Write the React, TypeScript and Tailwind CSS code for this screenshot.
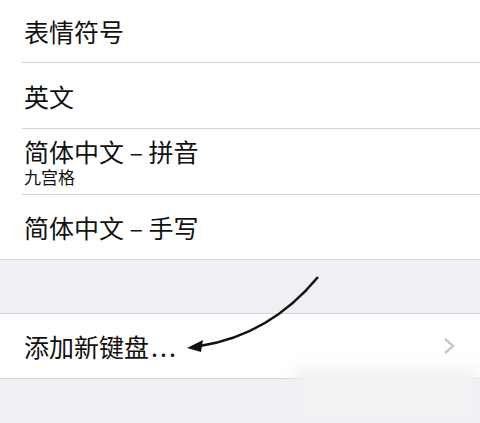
import React from "react";

const font = { fontFamily: '"Noto Sans CJK SC", "Noto Sans", sans-serif' };

function Row({ h, children, line = true }: { h: string; children: React.ReactNode; line?: boolean }) {
  return (
    <div className="flex flex-col">
      <div className={`${h} flex flex-col justify-center pl-[24px]`}>{children}</div>
      {line && <div className="ml-[22px] h-px bg-[#d4d4d8]" />}
    </div>
  );
}

export default function App() {
  return (
    <div className="relative w-[480px] h-[423px] overflow-hidden bg-[#efeff4] text-[#111]" style={font}>
      <div className="flex flex-col bg-white border-b border-[#d4d4d8]">
        <Row h="h-[62px]">
          <span className="text-[25px] leading-[28px]">表情符号</span>
        </Row>
        <Row h="h-[65px]">
          <span className="text-[25px] leading-[28px]">英文</span>
        </Row>
        <Row h="h-[65px]">
          <span className="text-[25px] leading-[28px]">简体中文 – 拼音</span>
          <span className="text-[17px] leading-[18px] mt-[3px]">九宫格</span>
        </Row>
        <Row h="h-[64px]" line={false}>
          <span className="text-[25px] leading-[28px]">简体中文 – 手写</span>
        </Row>
      </div>
      <div className="h-[53px]" />
      <div className="flex h-[66px] items-center justify-between bg-white border-y border-[#d4d4d8] pl-[24px] pr-[24px]">
        <span className="text-[25px] leading-[28px]">
          添加新键盘<span className="tracking-[2px] ml-[2px]">...</span>
        </span>
        <svg width="14" height="20" viewBox="0 0 14 20">
          <polyline points="3,3 11,10 3,17" fill="none" stroke="#c7c7cc" strokeWidth="2.5" />
        </svg>
      </div>
      <div className="absolute left-[295px] top-[367px] w-[185px] h-[56px] bg-[#f2f2f4] blur-sm" />
      <svg className="absolute left-0 top-0" width="480" height="423" viewBox="0 0 480 423">
        <path d="M318,277 Q270,335 200,346" fill="none" stroke="#111" strokeWidth="2.5" />
        <polygon points="187,348 203,340 201,352" fill="#111" />
      </svg>
    </div>
  );
}
